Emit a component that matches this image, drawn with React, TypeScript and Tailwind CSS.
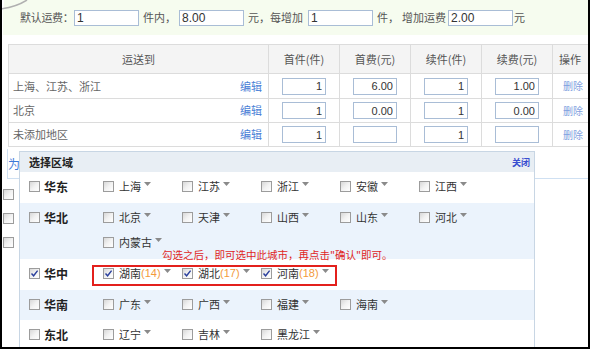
import React from 'react';

const FONT = { fontFamily: '"Noto Sans CJK SC", "Liberation Sans", sans-serif' };
const NUM = { fontFamily: '"Liberation Sans", "Noto Sans CJK SC", sans-serif' };

// small windows-xp style checkbox
const Check: React.FC<{ checked?: boolean }> = ({ checked }) => (
  <span className="inline-flex w-[11px] h-[11px] shrink-0 items-center justify-center border border-[#9c9c9c] bg-linear-to-br from-[#d8d8d8] via-[#f2f2f2] to-white">
    {checked && (
      <svg width="9" height="9" viewBox="0 0 9 9">
        <path d="M1.5 4.5 L3.6 6.8 L7.6 1.6" fill="none" stroke="#2a3f9c" strokeWidth="1.4" />
      </svg>
    )}
  </span>
);

const Caret = () => (
  <svg width="7" height="4" viewBox="0 0 7 4" className="ml-[3px] mb-[5px] shrink-0">
    <polygon points="0,0 7,0 3.5,4" fill="#8a8a8a" />
  </svg>
);

type Prov = { name: string; checked?: boolean; count?: number };

const Province: React.FC<{ p: Prov }> = ({ p }) => (
  <div className="flex items-center w-[79px] h-[15px]">
    <Check checked={p.checked} />
    <span className="ml-[5px] text-[11px] leading-none text-[#333] whitespace-nowrap">{p.name}</span>
    {p.count !== undefined && (
      <span className="text-[11px] leading-none text-[#f39a3a]" style={NUM}>({p.count})</span>
    )}
    <Caret />
  </div>
);

const regions: { group: string; checked?: boolean; row: string; provs: Prov[] }[] = [
  { group: '华东', row: 'bg-white pt-[7px] pb-[9px]', provs: [{ name: '上海' }, { name: '江苏' }, { name: '浙江' }, { name: '安徽' }, { name: '江西' }] },
  { group: '华北', row: 'bg-[#ebf3fc] pt-[7px] pb-[9px]', provs: [{ name: '北京' }, { name: '天津' }, { name: '山西' }, { name: '山东' }, { name: '河北' }, { name: '内蒙古' }] },
  { group: '华中', checked: true, row: 'bg-white pt-[7px] pb-[9px]', provs: [{ name: '湖南', checked: true, count: 14 }, { name: '湖北', checked: true, count: 17 }, { name: '河南', checked: true, count: 18 }] },
  { group: '华南', row: 'bg-[#ebf3fc] pt-[7px] pb-[8px]', provs: [{ name: '广东' }, { name: '广西' }, { name: '福建' }, { name: '海南' }] },
  { group: '东北', row: 'bg-white pt-[7px] pb-[8px]', provs: [{ name: '辽宁' }, { name: '吉林' }, { name: '黑龙江' }] },
];

const rows = [
  { area: '上海、江苏、浙江', a: '1', b: '6.00', c: '1', d: '1.00', h: 'h-[25px]' },
  { area: '北京', a: '1', b: '0.00', c: '1', d: '0.00', h: 'h-[24px]' },
  { area: '未添加地区', a: '1', b: '', c: '1', d: '', h: 'h-[24px]' },
];

const Cell: React.FC<{ v: string }> = ({ v }) => (
  <td className="border border-[#dcdcdc] text-center">
    <input
      readOnly
      value={v}
      className="w-[44px] h-[17px] border border-[#a9bdd6] bg-white text-right pr-[3px] text-[11px] text-[#333] outline-none align-middle"
      style={NUM}
    />
  </td>
);

const TopInput: React.FC<{ v: string }> = ({ v }) => (
  <input
    readOnly
    value={v}
    className="w-[65px] h-[16px] shrink-0 border border-[#a9bdd6] bg-white pl-[2px] text-[12px] text-[#333] outline-none"
    style={NUM}
  />
);

export default function App() {
  return (
    <div className="w-[590px] h-[350px] bg-white relative overflow-hidden" style={FONT}>
      <div className="relative h-[349px] border-l-2 border-r-2 border-b-2 border-black overflow-hidden">
        {/* default freight bar */}
        <div className="ml-px h-[35px] bg-[#f6fcef] flex items-center pl-[17px] text-[11px] text-[#555] leading-none whitespace-nowrap">
          <span className="w-[54px] shrink-0 tracking-[-0.3px]">默认运费：</span>
          <TopInput v="1" />
          <span className="w-[40px] pl-[4px] shrink-0">件内，</span>
          <TopInput v="8.00" />
          <span className="w-[64px] pl-[4px] shrink-0">元，每增加</span>
          <TopInput v="1" />
          <span className="w-[29px] pl-[4px] shrink-0">件，</span>
          <span className="w-[46px] shrink-0">增加运费</span>
          <TopInput v="2.00" />
          <span className="pl-[1px]">元</span>
        </div>

        {/* rate table */}
        <table className="mt-[9px] ml-[6px] border-collapse table-fixed w-[621px] text-[11px] leading-none">
          <colgroup>
            <col className="w-[260px]" />
            <col className="w-[71px]" />
            <col className="w-[71px]" />
            <col className="w-[71px]" />
            <col className="w-[71px]" />
            <col className="w-[77px]" />
          </colgroup>
          <thead>
            <tr className="h-[29px] bg-[#f4f4f4] text-[#555]">
              <th className="border border-[#dcdcdc] font-normal">运送到</th>
              <th className="border border-[#dcdcdc] font-normal">首件(件)</th>
              <th className="border border-[#dcdcdc] font-normal">首费(元)</th>
              <th className="border border-[#dcdcdc] font-normal">续件(件)</th>
              <th className="border border-[#dcdcdc] font-normal">续费(元)</th>
              <th className="border border-[#dcdcdc] font-normal text-left pl-[6px]">操作</th>
            </tr>
          </thead>
          <tbody>
            {rows.map((r) => (
              <tr key={r.area} className={r.h}>
                <td className="border border-[#dcdcdc] px-[4px] text-[#666]">
                  <div className="flex justify-between pr-[2px]">
                    <span>{r.area}</span>
                    <span className="text-[#4a7fd6]">编辑</span>
                  </div>
                </td>
                <Cell v={r.a} />
                <Cell v={r.b} />
                <Cell v={r.c} />
                <Cell v={r.d} />
                <td className="border border-[#dcdcdc] pl-[10px] text-[10px] text-[#7f9fe0]">删除</td>
              </tr>
            ))}
          </tbody>
        </table>

        {/* specified area box (mostly hidden under the popup) */}
        <div className="mt-[2px] ml-[5px] h-[30px] border-l border-b border-[#cfe0f2] flex items-center">
          <span className="text-[12px] text-[#3d78d8] leading-none">为</span>
        </div>
        <div className="ml-px mt-[10px] flex flex-col gap-[13px]">
          <Check />
          <Check />
          <Check />
        </div>

        {/* region picker popup */}
        <div className="absolute left-[17px] top-[151px] w-[516px] h-[220px] border border-[#c8d6e4] bg-white">
          <div className="h-[20px] bg-[#e8eef4] flex items-center justify-between pl-[9px] pr-[4px]">
            <span className="text-[11px] font-bold text-[#222] leading-none">选择区域</span>
            <span className="text-[9px] font-bold text-[#3a4fd0] leading-none">关闭</span>
          </div>
          {regions.map((g) => (
            <div key={g.group} className={`flex ${g.row}`}>
              <div className="w-[83px] shrink-0 pl-[9px] flex items-center h-[15px]">
                <Check checked={g.checked} />
                <span className="ml-[4px] text-[12px] font-bold text-[#222] leading-none">{g.group}</span>
              </div>
              <div className="flex flex-wrap w-[400px] gap-y-[10px]">
                {g.provs.map((p) => (
                  <Province key={p.name} p={p} />
                ))}
              </div>
            </div>
          ))}

          {/* annotation */}
          <span className="absolute left-[142px] top-[98px] text-[10.5px] leading-none text-[#e0261e] whitespace-nowrap">
            勾选之后，即可选中此城市，再点击"确认"即可。
          </span>
          <div className="absolute left-[72px] top-[113px] w-[245px] h-[21px] border-2 border-[#e3201c]" />
        </div>

        {/* corner of the callout bubble above */}
        <div className="absolute -left-[2px] top-0 w-[4px] h-[9px] bg-white" />
        <svg width="30" height="12" className="absolute -left-[2px] top-0">
          <path d="M0 9 Q 16 7 27 0" fill="none" stroke="#b0b0b0" strokeWidth="1.5" />
        </svg>
      </div>
    </div>
  );
}
